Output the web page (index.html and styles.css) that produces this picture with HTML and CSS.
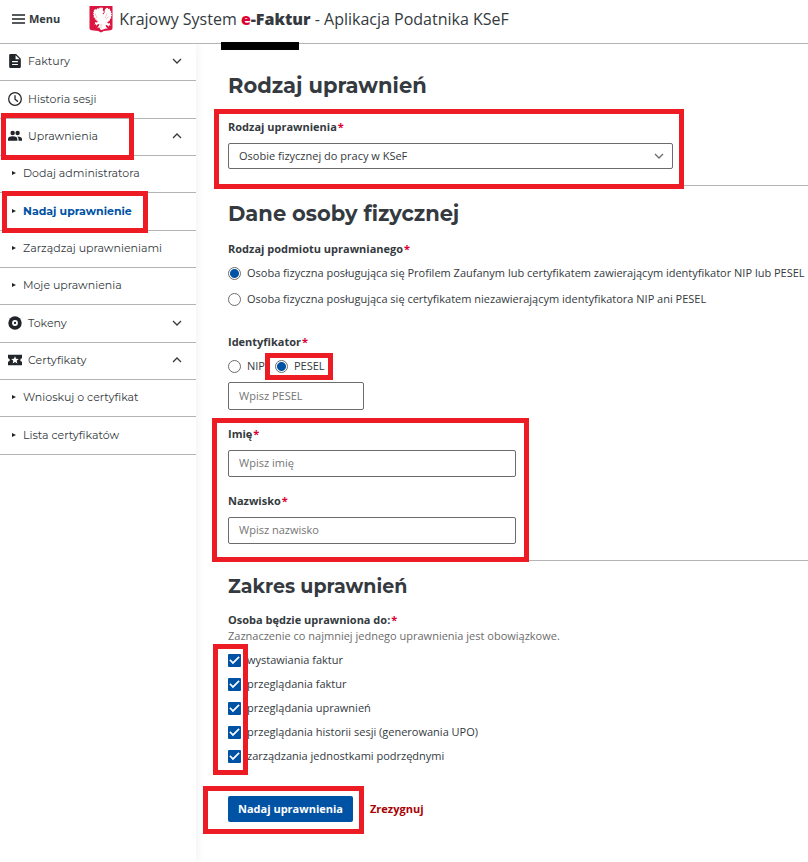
FILE: index.html
```html
<!DOCTYPE html>
<html lang="pl">
<head>
<meta charset="utf-8">
<meta name="viewport" content="width=device-width, initial-scale=1">
<title>Krajowy System e-Faktur</title>
<link rel="stylesheet" href="styles.css">
</head>
<body>
<header class="topbar">
  <button class="menu-button" type="button">
    <svg width="13" height="10" viewBox="0 0 13 10" aria-hidden="true"><path d="M0 1h13M0 5h13M0 9h13" stroke="#212529" stroke-width="1.4"/></svg>
    Menu
  </button>
  <a class="brand" href="#">
    <svg class="emblem" width="24" height="28" viewBox="0 0 24 28" aria-hidden="true">
      <path d="M.5 1h23v22.300q0 1.700-2 1.900l-6.700.7L12 27.500l-2.800-1.600-6.700-.7q-2-.2-2-1.900z" fill="#dc1440"/>
      <path d="M10.800 8 9.200 6.400l1.300-.9L10 2.500l1.200.8.8-1.300.8 1.300 1.200-.8-.2 2.800 1.400 2-1.600 1 .6 1.200 1.300-1.500.2-3 1.300-1.800 1.800-.4.400 1.200 1.700-.2v1.600l1.400.5-.5 1.500 1.200.8-.9 1.400.9 1.200-1.200 1 .6 1.500-1.500.7.200 1.600-1.500.1-.3 1.600-1.600-.3 1.500 1.400 1.800-.4-.2 1.300 1 1.200-1.700-.2-.6 1.400-1.200-1.500-1.700-.3.500 1.800 1.700 2-2-.3L12 25.200l-1.800-2.800-2 .3 1.700-2 .5-1.800-1.700.3-1.200 1.500-.6-1.400-1.700.2 1-1.200-.2-1.300 1.800.4 1.500-1.400-1.600.3-.3-1.600-1.500-.1.200-1.600-1.500-.7.600-1.500-1.200-1 .9-1.200-.9-1.400 1.200-.8-.5-1.500 1.400-.5V4.300l1.700.2.400-1.200 1.800.4 1.300 1.800.2 3 .8.8z" fill="#fff"/>
      <path d="M6 8.500 8 13M4.500 11.500l2.500 3M18 8.500 16 13M19.500 11.500l-2.500 3M12 19v4" stroke="#efa5b5" stroke-width=".7" fill="none"/>
    </svg>
    <span>Krajowy System <b class="brand-name"><span class="brand-e">e</span>-Faktur</b> - Aplikacja Podatnika KSeF</span>
  </a>
  <span class="redaction"></span>
</header>

<div class="layout">
  <nav class="sidebar" aria-label="Menu">
    <ul>
      <li><a href="#">
        <svg class="icon" viewBox="0 0 24 24"><path fill-rule="evenodd" d="M14 0H4Q2 0 2 2v20q0 2 2 2h16q2 0 2-2V8zM7 12h10v2H7zm0 5h10v2H7zM13 2l7 7h-7z"/></svg>
        <span>Faktury</span>
        <svg class="chevron" viewBox="0 0 10 6"><path d="m1 1 4 4 4-4"/></svg></a></li>
      <li><a href="#">
        <svg class="icon" viewBox="0 0 24 24"><path fill="none" stroke="#212529" stroke-width="2.200" d="M12 1.200A10.800 10.800 0 1 1 12 22.800 10.800 10.800 0 1 1 12 1.200M12 5.500v7l5 4"/></svg>
        <span>Historia sesji</span></a></li>
      <li><a class="marked marked-group" href="#">
        <svg class="icon" viewBox="0 0 24 24"><circle cx="8" cy="7" r="3.800"/><circle cx="16.500" cy="7" r="3.800"/><path d="M0 20v-3q0-4.500 8-4.500t8 4.500v3zM18 20v-3q0-2.500-2-4.300 8 0 8 4.300v3z"/></svg>
        <span>Uprawnienia</span>
        <svg class="chevron" viewBox="0 0 10 6"><path d="m1 5 4-4 4 4"/></svg></a></li>
      <li><a class="sub" href="#">Dodaj administratora</a></li>
      <li><a class="sub active marked marked-sub" href="#" aria-current="page">Nadaj uprawnienie</a></li>
      <li><a class="sub" href="#">Zarządzaj uprawnieniami</a></li>
      <li><a class="sub" href="#">Moje uprawnienia</a></li>
      <li><a href="#">
        <svg class="icon" viewBox="0 0 24 24"><circle cx="12" cy="12" r="11.500"/><circle cx="12" cy="12" r="5" fill="#fff"/><circle cx="12" cy="12" r="2"/></svg>
        <span>Tokeny</span>
        <svg class="chevron" viewBox="0 0 10 6"><path d="m1 1 4 4 4-4"/></svg></a></li>
      <li><a href="#">
        <svg class="icon" viewBox="0 0 24 24"><path d="M0 3h24v6q-3 0-3 3t3 3v6H0v-6q3 0 3-3T0 9z"/><path fill="#fff" d="m12 5.500 1.800 4.400 4.700.4-3.600 3 1.100 4.700-4-2.500L8 18l1.100-4.700-3.600-3 4.700-.4z"/></svg>
        <span>Certyfikaty</span>
        <svg class="chevron" viewBox="0 0 10 6"><path d="m1 5 4-4 4 4"/></svg></a></li>
      <li><a class="sub" href="#">Wnioskuj o certyfikat</a></li>
      <li><a class="sub" href="#">Lista certyfikatów</a></li>
    </ul>
  </nav>

  <main>
    <form>
      <section>
        <h1>Rodzaj uprawnień</h1>
        <div class="field field-wide marked marked-select">
          <label class="label" for="kind">Rodzaj uprawnienia<span class="req">*</span></label>
          <div class="select-wrap">
            <select id="kind"><option>Osobie fizycznej do pracy w KSeF</option></select>
            <svg class="chevron select-arrow" viewBox="0 0 10 6" aria-hidden="true"><path d="m1 1 4 4 4-4"/></svg>
          </div>
        </div>
      </section>

      <section>
        <h2>Dane osoby fizycznej</h2>
        <fieldset class="subject">
          <legend class="label">Rodzaj podmiotu uprawnianego<span class="req">*</span></legend>
          <label class="choice"><input type="radio" name="subject" checked>Osoba fizyczna posługująca się Profilem Zaufanym lub certyfikatem zawierającym identyfikator NIP lub PESEL</label>
          <label class="choice"><input type="radio" name="subject">Osoba fizyczna posługująca się certyfikatem niezawierającym identyfikatora NIP ani PESEL</label>
        </fieldset>
        <fieldset class="identifier">
          <legend class="label">Identyfikator<span class="req">*</span></legend>
          <div class="inline-choices">
            <label class="choice"><input type="radio" name="identifier">NIP</label>
            <label class="choice marked marked-radio"><input type="radio" name="identifier" checked>PESEL</label>
          </div>
          <input class="text-input short" type="text" placeholder="Wpisz PESEL" aria-label="PESEL">
        </fieldset>
        <div class="person marked marked-person">
          <div class="field">
            <label class="label" for="first">Imię<span class="req">*</span></label>
            <input class="text-input" id="first" type="text" placeholder="Wpisz imię">
          </div>
          <div class="field">
            <label class="label" for="last">Nazwisko<span class="req">*</span></label>
            <input class="text-input" id="last" type="text" placeholder="Wpisz nazwisko">
          </div>
        </div>
      </section>

      <section>
        <h3>Zakres uprawnień</h3>
        <fieldset>
          <legend class="label tight">Osoba będzie uprawniona do:<span class="req">*</span></legend>
          <p class="hint">Zaznaczenie co najmniej jednego uprawnienia jest obowiązkowe.</p>
          <div class="checks marked marked-checks">
            <label class="choice"><input type="checkbox" checked>wystawiania faktur</label>
            <label class="choice"><input type="checkbox" checked>przeglądania faktur</label>
            <label class="choice"><input type="checkbox" checked>przeglądania uprawnień</label>
            <label class="choice"><input type="checkbox" checked>przeglądania historii sesji (generowania UPO)</label>
            <label class="choice"><input type="checkbox" checked>zarządzania jednostkami podrzędnymi</label>
          </div>
        </fieldset>
        <div class="actions">
          <span class="marked marked-button"><button class="primary" type="button">Nadaj uprawnienia</button></span>
          <button class="cancel" type="button">Zrezygnuj</button>
        </div>
      </section>
    </form>
  </main>
</div>
</body>
</html>
```
FILE: styles.css
```css
*, *::before, *::after {
  box-sizing: border-box;
}

body {
  margin: 0;
  min-height: 100vh;
  display: flex;
  flex-direction: column;
  background: #fff;
  color: #343a40;
  font: 11px/16px "Open Sans", sans-serif;
}

button, input, select {
  font: inherit;
  color: inherit;
}

a {
  color: inherit;
  text-decoration: none;
}

/* Top bar */
.topbar {
  position: relative;
  display: flex;
  align-items: center;
  gap: 29px;
  height: 44px;
  padding: 0 12px 5px;
  border-bottom: 1px solid #b4b4b4;
}

.menu-button {
  display: flex;
  align-items: center;
  gap: 4px;
  padding: 0;
  border: 0;
  background: none;
  font-weight: 700;
}

.brand {
  display: flex;
  align-items: center;
  gap: 6px;
  font-size: 16px;
  line-height: 24px;
  white-space: nowrap;
}

.brand-name {
  font-weight: 800;
}

.brand-e, .req {
  color: #dc0032;
}

.redaction {
  position: absolute;
  z-index: 3;
  top: 42px;
  left: 221px;
  width: 78px;
  height: 8px;
  background: #000;
}

/* Sidebar */
.layout {
  display: flex;
  flex: 1;
}

.sidebar {
  flex: 0 0 196px;
  box-shadow: 2px 0 8px rgba(0, 0, 0, .05);
  clip-path: inset(0 -12px 0 0);
  font-family: Montserrat, Inter, sans-serif;
}

.sidebar ul {
  margin: 0;
  padding: 0;
  list-style: none;
}

.sidebar li {
  height: 37px;
  border-bottom: 1px solid #b4b4b4;
}

.sidebar li:nth-child(3n + 2) {
  height: 38px;
}

.sidebar a {
  display: flex;
  align-items: center;
  gap: 6px;
  height: 100%;
  padding: 0 14px 2px 8px;
}

.icon {
  width: 14px;
  height: 14px;
  fill: #212529;
}

.chevron {
  width: 10px;
  height: 6px;
  margin-left: auto;
  fill: none;
  stroke: #343a40;
  stroke-width: 1.3;
}

.sidebar .sub {
  padding-left: 12px;
}

.sub::before {
  content: "";
  border: 2px solid transparent;
  border-left: 4px solid #212529;
  border-right: 0;
  margin-right: 1px;
}

.sub.active {
  color: #0052a5;
  font-weight: 700;
}

/* Highlight frames */
.marked {
  position: relative;
}

.marked::after {
  content: "";
  position: absolute;
  z-index: 2;
  border: 5px solid #ed1c24;
  pointer-events: none;
}

.marked-group::after {
  inset: -6px 62px -5px 1px;
}

.marked-sub::after {
  inset: -2px 48px -3px 2px;
}

.marked-select::after {
  inset: -10px -11px -20px -14px;
}

.marked-radio::after {
  inset: -5px -8px -6px -10px;
}

.marked-person::after {
  inset: -8px -13px -18px -16px;
}

.marked-checks::after {
  top: -8px;
  bottom: -11px;
  left: -15px;
  width: 35px;
}

.marked-button::after {
  inset: -10px -11px -12px -25px;
}

/* Form */
main {
  flex: 1;
  min-width: 0;
  padding: 28px 0 28px 32px;
}

section + section {
  margin-top: 16px;
  padding-top: 14px;
  border-top: 1px solid #b4b4b4;
}

h1, h2, h3 {
  margin: 0;
  font-family: Montserrat, Inter, sans-serif;
  font-size: 21px;
  line-height: 28px;
  font-weight: 700;
}

h1 {
  margin-bottom: 19px;
}

h2 {
  margin-bottom: 13px;
}

h3 {
  margin-bottom: 13px;
  font-size: 19px;
  line-height: 24px;
}

fieldset {
  margin: 0;
  padding: 0;
  border: 0;
  min-width: 0;
}

.label {
  display: block;
  padding: 0;
  margin-bottom: 8px;
  font-weight: 700;
}

.label.tight {
  margin-bottom: 0;
}

.req {
  margin-left: 1px;
}

.field-wide {
  max-width: 445px;
}

.select-wrap {
  position: relative;
}

select {
  display: block;
  appearance: none;
  width: 100%;
  height: 26px;
  padding: 0 28px 0 10px;
  border: 1px solid #6c6c6c;
  border-radius: 2px;
  background: #fff;
}

.select-arrow {
  position: absolute;
  top: 10px;
  right: 9px;
  stroke: #6c6c6c;
  pointer-events: none;
}

.text-input {
  display: block;
  width: 100%;
  height: 27px;
  padding: 0 10px 2px;
  border: 1px solid #6c6c6c;
  border-radius: 2px;
  background: #fff;
}

.text-input.short {
  width: 136px;
  height: 28px;
}

.text-input::placeholder {
  color: #757575;
  opacity: 1;
}

.choice {
  display: flex;
  align-items: center;
  gap: 6px;
}

.choice input {
  appearance: none;
  flex: none;
  width: 13px;
  height: 13px;
  margin: 0;
}

.choice input[type="radio"] {
  border: 1px solid #6c6c6c;
  border-radius: 50%;
}

.choice input[type="radio"]:checked {
  background: radial-gradient(circle, #0052a5 0 4px, #fff 5px);
}

.choice input[type="checkbox"] {
  border-radius: 1px;
  background: #0052a5;
}

.choice input[type="checkbox"]::before {
  content: "";
  display: block;
  width: 13px;
  height: 13px;
  background: #fff;
  clip-path: polygon(10% 52%, 19% 44%, 38% 63%, 81% 22%, 90% 31%, 38% 82%);
}

.subject .choice + .choice {
  margin-top: 10px;
}

.identifier {
  margin-top: 27px;
}

.inline-choices {
  display: flex;
  gap: 10px;
  margin-bottom: 8px;
}

.person {
  display: grid;
  gap: 16px;
  max-width: 288px;
  margin-top: 16px;
}

.hint {
  margin: 0 0 8px;
  color: #6c6c6c;
}

.checks {
  display: grid;
  gap: 8px;
}

.actions {
  display: flex;
  align-items: center;
  gap: 17px;
  margin-top: 32px;
}

.primary {
  display: block;
  height: 26px;
  padding: 0 10px;
  border: 0;
  border-radius: 2px;
  background: #0052a5;
  color: #fff;
  font-weight: 700;
}

.cancel {
  padding: 0;
  border: 0;
  background: none;
  color: #a90003;
  font-weight: 700;
}
```
